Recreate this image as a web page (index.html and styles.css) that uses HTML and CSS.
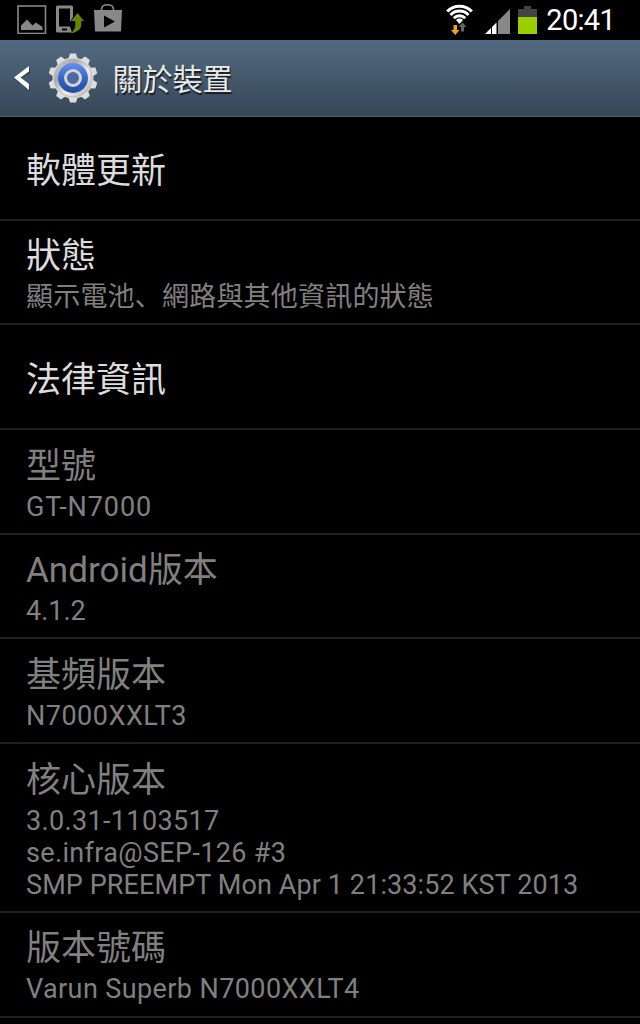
FILE: index.html
```html
<!DOCTYPE html>
<html lang="zh-Hant">
<head>
    <meta charset="UTF-8">
    <meta name="viewport" content="width=device-width, initial-scale=1.0">
    <title>關於裝置</title>
    <link rel="stylesheet" href="styles.css">
</head>
<body>

    <!-- Status bar -->
    <div class="status-bar">
        <div class="notifications">
            <svg width="30" height="30" viewBox="0 0 30 30">
                <rect x="1" y="2" width="27.500" height="27.500" fill="none" stroke="#888" stroke-width="1.6"/>
                <path d="M4 26V21.500L10 15.500L15.500 21.500L19 18.500L25.500 23V26Z" fill="#888"/>
            </svg>
            <svg width="30" height="30" viewBox="0 0 30 30">
                <path fill="#888" fill-rule="evenodd" d="M2.500 1.500H16.500Q18 1.500 18 3V13L15 18V4.500H4V22.500H15L17 28.500H2.500Q1 28.500 1 27V3Q1 1.500 2.500 1.500ZM7 24.500V26.500H12V24.500Z"/>
                <path d="M15.500 29.500Q22 24 20 17H16L22.500 9L29 17H26Q28.500 27 15.500 29.500Z" fill="#638500"/>
            </svg>
            <svg width="30" height="30" viewBox="0 0 30 30">
                <path d="M8.500 8V5Q9 0.800 14.500 0.800T20.500 5V8" fill="none" stroke="#888" stroke-width="1.6"/>
                <path fill="#888" fill-rule="evenodd" d="M1 6H29L28 27.500H2ZM11 11.500V23.500L22 17.500Z"/>
            </svg>
        </div>
        <div class="system-icons">
            <svg width="30" height="32" viewBox="0 0 30 32">
                <g fill="none" stroke="#fff" stroke-width="3">
                    <path d="M2.200 8.600A16.800 16.800 0 0 1 26.800 8.600"/>
                    <path d="M5.500 11.900A12.300 12.300 0 0 1 23.500 11.900"/>
                    <path d="M8.800 15.200A7.900 7.900 0 0 1 20.200 15.200"/>
                </g>
                <path d="M11 17A5 5 0 0 1 18 17L14.500 21Z" fill="#fff"/>
                <path d="M8.500 22H12V27H14.500L10.300 32L6 27H8.500Z" fill="#f69a28"/>
                <path d="M16 28.500V24H13.500L17.500 19.500L21.500 24H19V28.500Z" fill="#666"/>
            </svg>
            <svg class="signal" width="27" height="26" viewBox="0 0 27 26">
                <path d="M1 25L7 19V25Z" fill="#fff"/>
                <path d="M8 18L12.500 13.500V25H8Z" fill="#fff"/>
                <path d="M14 12L26 0V25H14Z" fill="#888"/>
            </svg>
            <svg class="battery" width="19" height="29" viewBox="0 0 19 29">
                <path d="M0 3H6V0H13V3H19V12H0Z" fill="#444"/>
                <rect y="11" width="19" height="17" fill="#99cf00"/>
            </svg>
            <span class="clock">20:41</span>
        </div>
    </div>

    <!-- Action bar -->
    <header class="action-bar">
        <svg class="back" width="18" height="27" viewBox="0 0 18 27">
            <path d="M17 2V8L7.500 13.500L17 20V26L1 13.500Z" fill="#222e38" opacity="0.6"/>
            <path d="M16 1V6.500L7.500 12.500L16 19V25L1 12.500Z" fill="#fff"/>
        </svg>
        <svg class="gear" width="50" height="52" viewBox="-25 -26 50 52">
            <defs>
                <linearGradient id="silver" x1="0" y1="0" x2="1" y2="1">
                    <stop offset="0" stop-color="#d8d8d8"/>
                    <stop offset="0.3" stop-color="#aaa"/>
                    <stop offset="0.6" stop-color="#eee"/>
                    <stop offset="1" stop-color="#aaa"/>
                </linearGradient>
                <linearGradient id="blue" x1="0" y1="0" x2="0" y2="1">
                    <stop offset="0" stop-color="#6791ed"/>
                    <stop offset="0.5" stop-color="#3567c9"/>
                    <stop offset="1" stop-color="#204c9c"/>
                </linearGradient>
                <path id="tooth" d="M-5 -18L-3 -24.500H3L5 -18Z"/>
            </defs>
            <g fill="#dedede">
                <use href="#tooth"/>
                <use href="#tooth" transform="rotate(36)"/>
                <use href="#tooth" transform="rotate(72)"/>
                <use href="#tooth" transform="rotate(108)"/>
                <use href="#tooth" transform="rotate(144)"/>
                <use href="#tooth" transform="rotate(180)"/>
                <use href="#tooth" transform="rotate(216)"/>
                <use href="#tooth" transform="rotate(252)"/>
                <use href="#tooth" transform="rotate(288)"/>
                <use href="#tooth" transform="rotate(324)"/>
            </g>
            <circle r="20.500" fill="#dedede"/>
            <circle r="19" fill="url(#silver)" stroke="#aaa" stroke-width="0.700"/>
            <circle r="15" fill="url(#blue)"/>
            <circle r="7.500" fill="#4b69a6" stroke="#d4d4d4" stroke-width="3"/>
        </svg>
        <h1>關於裝置</h1>
    </header>

    <!-- Settings list -->
    <ul class="settings">
        <li class="item enabled">
            <h2>軟體更新</h2>
        </li>
        <li class="item enabled">
            <h2>狀態</h2>
            <p>顯示電池<span class="comma" lang="ja">、</span>網路與其他資訊的狀態</p>
        </li>
        <li class="item enabled">
            <h2>法律資訊</h2>
        </li>
        <li class="item">
            <h2>型號</h2>
            <p class="model">GT-N7000</p>
        </li>
        <li class="item">
            <h2>Android版本</h2>
            <p>4.1.2</p>
        </li>
        <li class="item">
            <h2>基頻版本</h2>
            <p class="baseband">N7000XXLT3</p>
        </li>
        <li class="item">
            <h2>核心版本</h2>
            <p class="kernel">3.0.31-1103517<br>se.infra@SEP-126 #3</p>
            <p class="kernel-date">SMP PREEMPT Mon Apr 1 21:33:52 KST 2013</p>
        </li>
        <li class="item">
            <h2>版本號碼</h2>
            <p class="build">Varun Superb N7000XXLT4</p>
        </li>
    </ul>

</body>
</html>
```
FILE: styles.css
```css
* {
    box-sizing: border-box;
}

body {
    margin: 0;
    height: 100vh;
    overflow: hidden;
    background-color: #000;
    font-family: Roboto, "Noto Sans CJK TC", sans-serif;
}

svg {
    display: block;
    flex: none;
}

h1, h2, p {
    margin: 0;
    font-weight: normal;
    white-space: nowrap;
}

.status-bar {
    display: flex;
    justify-content: space-between;
    height: 40px;
    padding: 4px 25px 0 17px;
}

.notifications {
    display: flex;
    gap: 8px;
}

.system-icons {
    display: flex;
    align-items: flex-end;
    height: 31px;
}

.system-icons .signal {
    margin-left: 9px;
}

.system-icons .battery {
    margin: 0 9px 0 7px;
}

.clock {
    color: #fff;
    font-size: 29px;
    line-height: 29px;
    letter-spacing: -0.7px;
}

.action-bar {
    display: flex;
    align-items: center;
    height: 77px;
    padding-left: 13px;
    background: linear-gradient(#526a80, #364757);
    border-bottom: 1px solid #4a5f70;
}

.gear {
    margin-left: 17px;
}

.action-bar h1 {
    margin-left: 14.5px;
    padding-bottom: 2px;
    color: #e8e8e8;
    font-size: 30px;
    text-shadow: 1px 2px 1px rgba(0, 0, 0, 0.7);
}

.settings {
    margin: -1px 0 0;
    padding: 0;
    list-style: none;
}

.item {
    display: flex;
    flex-direction: column;
    justify-content: center;
    min-height: 104.7px;
    padding: 15.6px 26px 10.1px;
    border-bottom: 2px solid #202020;
    color: #808080;
}

.item h2 {
    font-size: 35px;
    line-height: 41px;
}

.item h2:only-child {
    margin-top: 2px;
}

.item p {
    font-size: 27px;
    line-height: 32px;
}

.item h2 + p {
    margin-top: 4px;
}

.enabled h2 {
    color: #dcdcdc;
}

.enabled p {
    height: 32px;
    letter-spacing: 0.2px;
}

.comma {
    font-family: "Noto Sans CJK JP", sans-serif;
    line-height: 0;
}

.model {
    letter-spacing: 0.9px;
}

.baseband {
    letter-spacing: 0.5px;
}

.kernel {
    letter-spacing: 0.35px;
}

.kernel-date {
    letter-spacing: 0.1px;
}

.build {
    letter-spacing: 0.4px;
}
```
